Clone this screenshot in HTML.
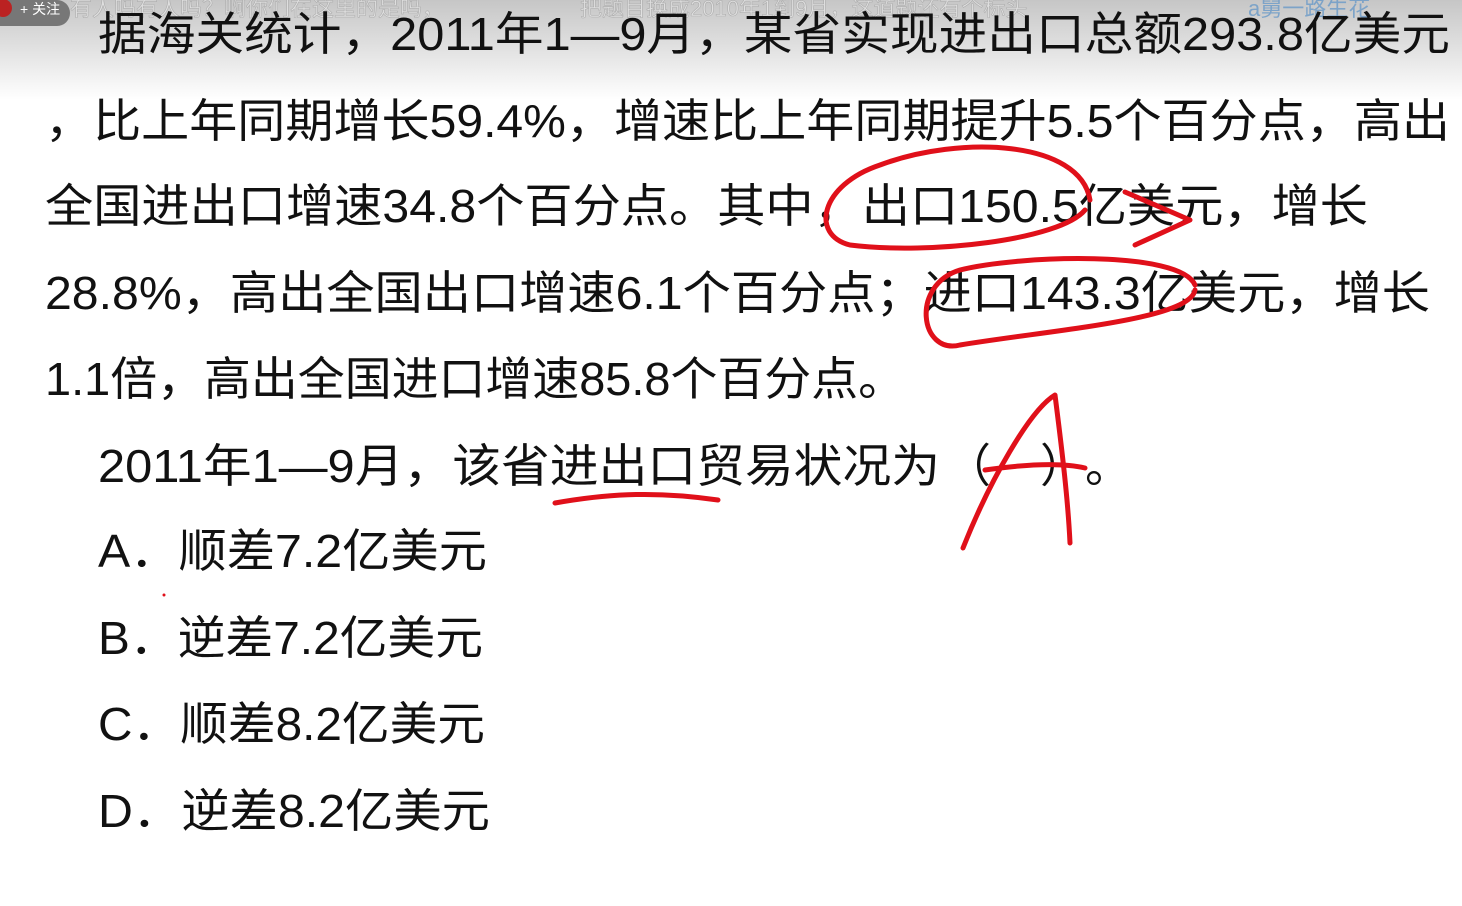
<!DOCTYPE html>
<html><head><meta charset="utf-8"><style>
html,body{margin:0;padding:0;width:1462px;height:906px;overflow:hidden;background:#fff}
svg{display:block}
text{font-family:"Liberation Sans","Noto Sans CJK SC",sans-serif;fill:#111}
</style></head><body>
<svg width="1462" height="906" viewBox="0 0 1462 906" xmlns="http://www.w3.org/2000/svg">
<defs><linearGradient id="g" x1="0" y1="0" x2="0" y2="1">
<stop offset="0" stop-color="#c6c6c6"/><stop offset="0.5" stop-color="#e2e2e2"/><stop offset="1" stop-color="#fff"/></linearGradient></defs>
<rect x="0" y="0" width="1462" height="100" fill="url(#g)"/>
<rect x="-20" y="0" width="90" height="26" rx="13" fill="#777"/>
<circle cx="3" cy="8" r="9" fill="#b22"/>
<text x="20" y="14" font-size="14" style="fill:#fff">+ 关注</text>
<text x="70" y="16" font-size="22" style="fill:#eee;opacity:.6;stroke:#999;stroke-width:.6">有人吗有人吗？啊你们在这里的是吗，</text>
<text x="580" y="16" font-size="22" style="fill:#eee;opacity:.6;stroke:#999;stroke-width:.6">把题目换成2010年1到9月，这道题还有个标头</text>
<text x="1248" y="16" font-size="22" style="fill:#6a9ac8;opacity:.8">a舅一路生花</text>
<g font-size="46">
<text x="98" y="50" textLength="1352" lengthAdjust="spacingAndGlyphs">据海关统计，2011年1—9月，某省实现进出口总额293.8亿美元</text>
<text x="45" y="137" textLength="1405" lengthAdjust="spacingAndGlyphs">，比上年同期增长59.4%，增速比上年同期提升5.5个百分点，高出</text>
<text x="45" y="222" textLength="1323" lengthAdjust="spacingAndGlyphs">全国进出口增速34.8个百分点。其中，出口150.5亿美元，增长</text>
<text x="45" y="309" textLength="1385" lengthAdjust="spacingAndGlyphs">28.8%，高出全国出口增速6.1个百分点；进口143.3亿美元，增长</text>
<text x="45" y="395" textLength="860" lengthAdjust="spacingAndGlyphs">1.1倍，高出全国进口增速85.8个百分点。</text>
<text x="98" y="482" textLength="842" lengthAdjust="spacingAndGlyphs">2011年1—9月，该省进出口贸易状况为</text>
<text x="945" y="482">（</text><text x="1040" y="482">）</text><text x="1085" y="482">。</text>
<text x="98" y="567" textLength="389" lengthAdjust="spacingAndGlyphs">A．顺差7.2亿美元</text>
<text x="98" y="654" textLength="385" lengthAdjust="spacingAndGlyphs">B．逆差7.2亿美元</text>
<text x="98" y="740" textLength="387" lengthAdjust="spacingAndGlyphs">C．顺差8.2亿美元</text>
<text x="98" y="827" textLength="392" lengthAdjust="spacingAndGlyphs">D．逆差8.2亿美元</text>
</g>
<g fill="none" stroke="#e0101a" stroke-width="5" stroke-linecap="round" stroke-linejoin="round">
<path d="M1090 200 C1080 140 960 135 880 165 C820 185 810 235 850 245 C930 255 1060 240 1085 210"/>
<path d="M1125 192 L1190 220 L1135 245"/>
<path d="M1195 285 C1180 250 1020 255 960 270 C910 285 920 355 960 345 C1050 330 1190 320 1195 290"/>
<path d="M555 503 C600 495 650 490 718 500"/>
<path d="M963 548 C990 480 1030 410 1055 395 C1062 450 1068 500 1070 543"/>
<path d="M985 470 C1020 465 1060 462 1085 468"/>
</g>
<circle cx="164" cy="595" r="1.5" fill="#e0101a"/>
</svg>
</body></html>
